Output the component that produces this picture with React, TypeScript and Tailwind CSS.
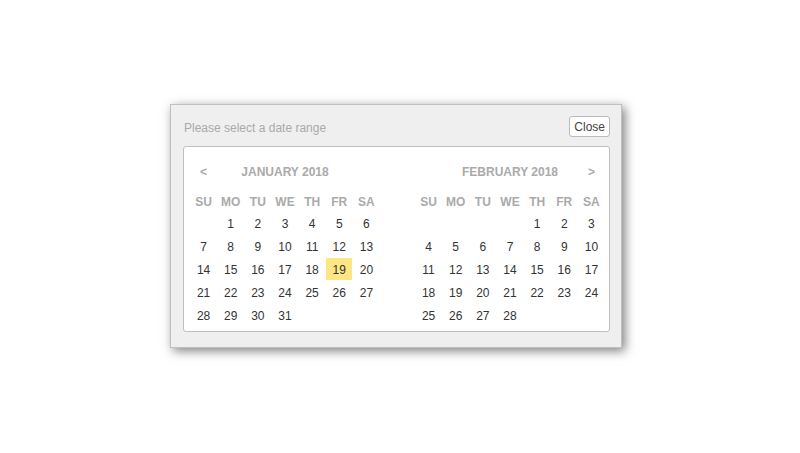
import React from "react";

type Month = {
  name: string;
  offset: number; // weekday index of the 1st (0 = Sunday)
  days: number;
  prev?: boolean;
  next?: boolean;
};

const WEEKDAYS = ["SU", "MO", "TU", "WE", "TH", "FR", "SA"];

const MONTHS: Month[] = [
  { name: "January 2018", offset: 1, days: 31, prev: true },
  { name: "February 2018", offset: 4, days: 28, next: true },
];

// today's marker (Jan 19)
const TODAY = { month: 0, day: 19 };

function MonthTable({ month, index }: { month: Month; index: number }) {
  const cells: (number | null)[] = [];
  for (let i = 0; i < month.offset; i++) cells.push(null);
  for (let d = 1; d <= month.days; d++) cells.push(d);

  return (
    <div className="w-[190px]">
      <div className="h-[38px] pt-[2px] grid grid-cols-7 items-center font-bold text-[#aaa]">
        <span className="text-center">{month.prev ? "<" : ""}</span>
        <span className="col-span-5 text-center uppercase">{month.name}</span>
        <span className="text-center">{month.next ? ">" : ""}</span>
      </div>
      <div className="grid grid-cols-7 h-[22px] pt-[2px] items-center font-bold text-[#aaa]">
        {WEEKDAYS.map((w) => (
          <span key={w} className="text-center">
            {w}
          </span>
        ))}
      </div>
      <div className="grid grid-cols-7 gap-y-px">
        {cells.map((d, i) => {
          const today = d === TODAY.day && index === TODAY.month;
          return (
            <div key={i} className="h-[22px] flex justify-center">
              {d !== null && (
                <span
                  className={
                    "w-[26px] h-[22px] pt-[2px] flex items-center justify-center text-[#333] " +
                    (today ? "bg-[#ffe684]" : "")
                  }
                >
                  {d}
                </span>
              )}
            </div>
          );
        })}
      </div>
    </div>
  );
}

export default function App() {
  return (
    <div className="w-[800px] h-[453px] bg-white pl-[170px] pt-[104px] font-['Liberation_Sans',Arial,sans-serif] text-[12px] leading-none">
      <div className="w-[452px] border border-[#bfbfbf] bg-[#efefef] pl-[12px] pr-[11px] pb-[15px] shadow-[3px_3px_10px_rgba(0,0,0,0.5)]">
        <div className="h-[41px] pt-[2px] flex items-center justify-between">
          <span className="pl-px pt-[2px] text-[#aaa]">Please select a date range</span>
          <button className="h-[21px] px-[4px] border border-[#bbb] rounded-[3px] bg-white text-[#444] text-[12px]">
            Close
          </button>
        </div>
        <div className="border border-[#bfbfbf] rounded-[3px] bg-white pl-[6px] pr-[4px] py-[5px] flex justify-between">
          {MONTHS.map((m, i) => (
            <MonthTable key={m.name} month={m} index={i} />
          ))}
        </div>
      </div>
    </div>
  );
}
